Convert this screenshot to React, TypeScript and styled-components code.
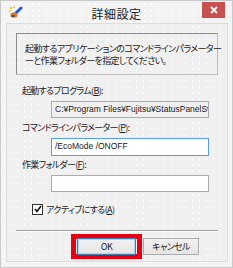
import * as React from 'react';
import styled, { createGlobalStyle } from 'styled-components';

const GlobalStyle = createGlobalStyle`
  html, body {
    margin: 0;
    padding: 0;
    background: #f3f3f3;
  }
  body {
    font-family: "Noto Sans CJK JP", "Noto Sans", sans-serif;
    font-size: 9px;
    color: #1a1a1a;
    font-feature-settings: "palt";
  }
`;

const dots = `
  background-image: radial-gradient(rgba(255,255,255,0.9) 0.6px, transparent 0.8px);
  background-size: 7px 6px;
`;

const Window = styled.div`
  width: 233px;
  height: 268px;
  box-sizing: border-box;
  border: 1px solid #c9c9c9;
  background-color: #f3f3f3;
  ${dots}
  display: flex;
  flex-direction: column;
  overflow: hidden;
`;

const TitleBar = styled.div`
  height: 22px;
  display: flex;
  align-items: center;
  position: relative;
  flex-shrink: 0;
`;

const AppIcon = styled.svg`
  margin-left: 7px;
  width: 15px;
  height: 14px;
`;

const Title = styled.div`
  position: absolute;
  left: 0;
  right: 0;
  top: 4px;
  text-align: center;
  font-size: 12px;
  color: #222;
  letter-spacing: 0.5px;
`;

const CloseButton = styled.div`
  position: absolute;
  top: 1px;
  right: 7px;
  width: 23px;
  height: 16px;
  background: #c75050;
  display: flex;
  align-items: center;
  justify-content: center;
`;

const Client = styled.div`
  flex: 1;
  margin: 0 4px 5px 5px;
  border: 1px solid #dcdcdc;
  background-color: #f0f0f0;
  ${dots}
  display: flex;
  flex-direction: column;
  padding: 9px 9px 0 9px;
`;

const Description = styled.div`
  height: 42px;
  box-sizing: border-box;
  border: 1px solid #8c8c8c;
  border-right-color: #bdbdbd;
  border-bottom-color: #bdbdbd;
  padding: 9px 0 0 8px;
  line-height: 12px;
  letter-spacing: -0.6px;
  white-space: nowrap;
`;

const Field = styled.div<{ $top: number }>`
  margin-top: ${p => p.$top}px;
  display: flex;
  flex-direction: column;
`;

const Label = styled.div`
  padding-left: 6px;
  height: 14px;
  line-height: 14px;
  letter-spacing: -0.7px;
  white-space: nowrap;
`;

const Key = styled.span`
  text-decoration: underline;
`;

const Input = styled.div<{ $readOnly?: boolean; $focused?: boolean }>`
  margin-left: 35px;
  width: 158px;
  height: ${p => (p.$focused ? 18 : 17)}px;
  margin-top: 3px;
  box-sizing: border-box;
  border: 1px solid ${p => (p.$focused ? '#569de5' : '#ababab')};
  background: ${p => (p.$readOnly ? '#f0f0f0' : '#ffffff')};
  font-family: "Liberation Sans", "Noto Sans", sans-serif;
  font-size: 8.5px;
  line-height: 15px;
  padding-left: 3px;
  overflow: hidden;
  white-space: nowrap;
`;

const CheckRow = styled.label`
  margin-top: 10px;
  margin-left: 16px;
  display: flex;
  align-items: center;
  gap: 3px;
  height: 14px;
  letter-spacing: -0.6px;
`;

const CheckBox = styled.span`
  width: 9px;
  height: 9px;
  border: 1px solid #333;
  background: #fff;
  display: flex;
  align-items: center;
  justify-content: center;
`;

const Separator = styled.div`
  margin-top: 14px;
  height: 1px;
  background: #a0a0a0;
  border-bottom: 1px solid #fff;
`;

const ButtonRow = styled.div`
  display: flex;
  align-items: center;
  margin-top: 2px;
  padding-left: 55px;
  gap: 1px;
`;

const Highlight = styled.div`
  border: 5px solid #e60012;
  padding: 0 1px;
  height: 25px;
  box-sizing: border-box;
  display: flex;
  align-items: center;
`;

const Button = styled.div<{ $default?: boolean }>`
  width: ${p => (p.$default ? 59 : 56)}px;
  height: 17px;
  box-sizing: border-box;
  border: 1px solid ${p => (p.$default ? '#3c7fb1' : '#acacac')};
  box-shadow: ${p => (p.$default ? 'inset 0 0 0 1px #aad4f4' : 'none')};
  background: linear-gradient(#f2f2f2, #e5e5e5);
  display: flex;
  align-items: center;
  justify-content: center;
  font-size: 9px;
  letter-spacing: -0.6px;
`;

export default function App() {
  return (
    <>
      <GlobalStyle />
      <Window>
        <TitleBar>
          <AppIcon viewBox="0 0 15 14">
            <path d="M7 9 L13 3" stroke="#2a56c6" strokeWidth="3" strokeLinecap="round" />
            <ellipse cx="6" cy="10" rx="3.5" ry="2.6" fill="#e8742a" />
            <ellipse cx="5" cy="11" rx="2" ry="1.3" fill="#555" />
            <circle cx="3" cy="3" r="1.2" fill="#f0c419" />
            <circle cx="6" cy="2" r="0.9" fill="#f0c419" />
            <circle cx="2" cy="6" r="0.9" fill="#f0c419" />
          </AppIcon>
          <Title>詳細設定</Title>
          <CloseButton>
            <svg width="8" height="8" viewBox="0 0 8 8">
              <path d="M1 1 L7 7 M7 1 L1 7" stroke="#fff" strokeWidth="1.8" />
            </svg>
          </CloseButton>
        </TitleBar>
        <Client>
          <Description>
            起動するアプリケーションのコマンドラインパラメーター
            <br />
            ーと作業フォルダーを指定してください。
          </Description>
          <Field $top={9}>
            <Label>
              起動するプログラム(<Key>B</Key>):
            </Label>
            <Input $readOnly>C:¥Program Files¥Fujitsu¥StatusPanelSv</Input>
          </Field>
          <Field $top={3}>
            <Label>
              コマンドラインパラメーター(<Key>P</Key>):
            </Label>
            <Input $focused>/EcoMode /ONOFF</Input>
          </Field>
          <Field $top={2}>
            <Label>
              作業フォルダー(<Key>F</Key>):
            </Label>
            <Input />
          </Field>
          <CheckRow>
            <CheckBox>
              <svg width="8" height="8" viewBox="0 0 8 8">
                <path d="M1 4 L3 6.5 L7 1" stroke="#111" strokeWidth="1.6" fill="none" />
              </svg>
            </CheckBox>
            <span>
              アクティブにする(<Key>A</Key>)
            </span>
          </CheckRow>
          <Separator />
          <ButtonRow>
            <Highlight>
              <Button $default>OK</Button>
            </Highlight>
            <Button>キャンセル</Button>
          </ButtonRow>
        </Client>
      </Window>
    </>
  );
}
